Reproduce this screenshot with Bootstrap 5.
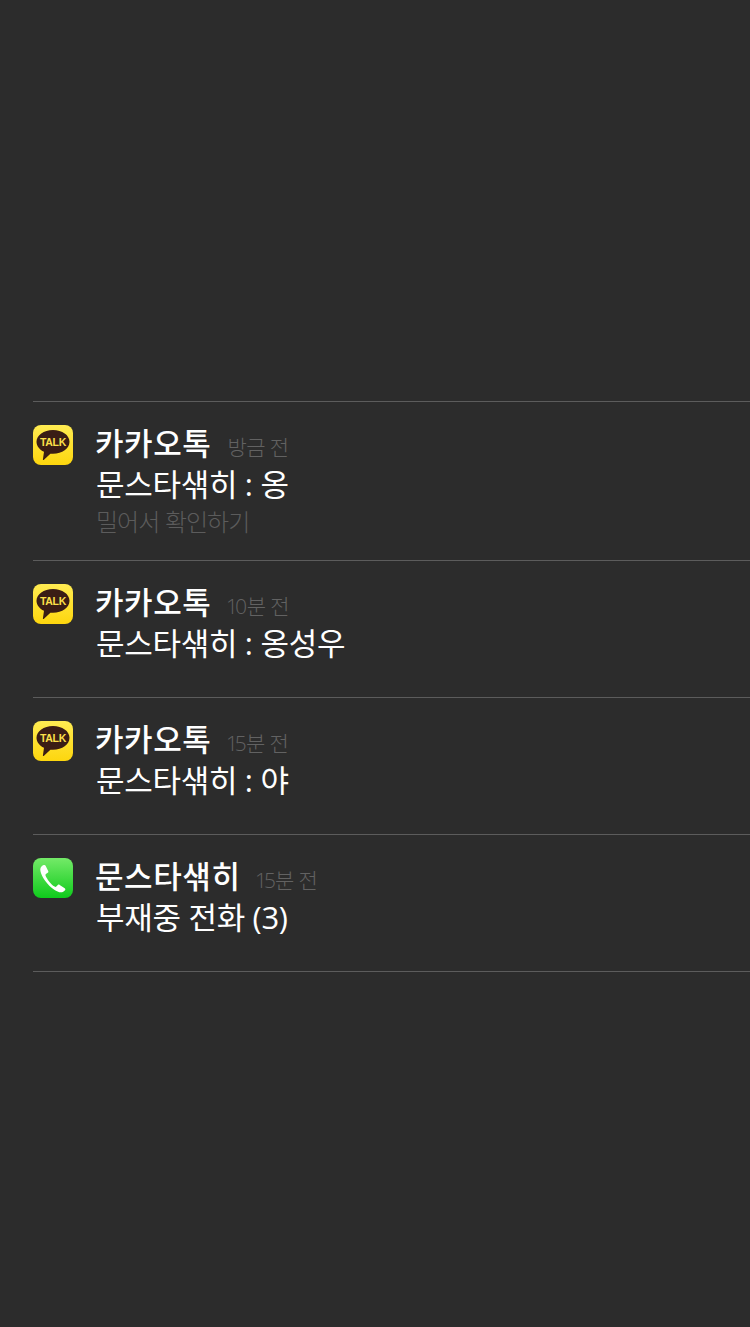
<!DOCTYPE html>
<html lang="ko">
<head>
  <meta charset="UTF-8" />
  <meta name="viewport" content="width=device-width, initial-scale=1.0" />
  <title>알림</title>
  <link href="https://cdn.jsdelivr.net/npm/bootstrap@5.3.3/dist/css/bootstrap.min.css" rel="stylesheet" />
  <script src="https://cdn.jsdelivr.net/npm/bootstrap@5.3.3/dist/js/bootstrap.bundle.min.js"></script>
  <style>
    body { background: #2c2c2c; font-family: "Noto Sans CJK KR", "Noto Sans", sans-serif; min-height: 1327px; }
    .noti-list { padding: 401px 0 0 33px; }
    .noti-row { border-top: 1px solid #5c5c5c; height: 137px; padding-top: 23px; }
    .noti-row.tall { height: 159px; }
    .noti-last { border-top: 1px solid #5c5c5c; }
    .noti-icon { width: 40px; height: 40px; flex: none; display: block; }
    .noti-text { margin-left: 22px; }
    .noti-name { color: #fff; font-size: 31px; font-weight: 500; line-height: 34px; letter-spacing: .6px; }
    .noti-time { color: #626262; font-family: "Open Sans", "Noto Sans CJK KR", sans-serif; font-size: 21px; font-weight: 300; margin-left: 16px; letter-spacing: -.6px; font-variant-numeric: proportional-nums; }
    .noti-msg { color: #fff; font-family: "Open Sans", "Noto Sans CJK KR", sans-serif; font-size: 31px; font-weight: 400; line-height: 40px; letter-spacing: -.3px; margin-left: 1px; }
    .noti-hint { color: #5c5c5c; font-size: 24px; font-weight: 300; line-height: 34px; letter-spacing: -1px; margin-left: 1px; }
  </style>
</head>
<body>
  <svg width="0" height="0" class="position-absolute">
    <defs>
      <linearGradient id="talkBg" x1="0" y1="0" x2="0" y2="1">
        <stop offset="0" stop-color="#ffec52" />
        <stop offset="1" stop-color="#fdd60e" />
      </linearGradient>
      <linearGradient id="phoneBg" x1="0" y1="0" x2="0" y2="1">
        <stop offset="0" stop-color="#74ea68" />
        <stop offset="1" stop-color="#0fcb1c" />
      </linearGradient>
      <symbol id="talkIcon" viewBox="0 0 40 40">
        <rect width="40" height="40" rx="8" fill="url(#talkBg)" />
        <path d="M20 5C10.800 5 3.500 10.200 3.500 16.800c0 4.200 3 7.900 7.500 10L9.900 34.500c-.1.500.4.800.8.500l6.700-6.300c.9.100 1.700.1 2.600.1 9.200 0 16.500-5.300 16.500-12S29.200 5 20 5z" fill="#3a1d15" />
        <text x="20" y="21" text-anchor="middle" font-family="Liberation Sans, sans-serif" font-size="10.500" font-weight="700" letter-spacing="-.3" fill="#fde04a">TALK</text>
      </symbol>
      <symbol id="phoneIcon" viewBox="0 0 40 40">
        <rect width="40" height="40" rx="8" fill="url(#phoneBg)" />
        <path transform="translate(1.500 1.500)" d="M9.200 5.600c-1.500.5-3.300 2-3.400 4.200-.1 3.300 2.300 8.300 6 13 3.800 4.700 8.700 8.800 13 9.900 2.500.6 4.600-.5 5.700-1.900.6-.8.400-1.500-.3-2l-5-3.400c-.7-.4-1.300-.4-1.900.2l-1.500 1.500c-.5.400-1.100.4-1.700 0-1.900-1.300-3.800-3.100-5.500-5.200-1.600-2-2.900-4.100-3.600-5.900-.2-.6-.1-1.100.4-1.500l1.800-1.200c.7-.5.800-1.100.5-1.900l-2.600-5.200c-.4-.7-1-.9-1.900-.6z" fill="#fff" />
      </symbol>
    </defs>
  </svg>

  <div class="noti-list">
    <div class="noti-row tall d-flex">
      <svg class="noti-icon"><use href="#talkIcon" /></svg>
      <div class="noti-text">
        <div class="noti-name">카카오톡<span class="noti-time">방금 전</span></div>
        <div class="noti-msg">문스타샊히 : 옹</div>
        <div class="noti-hint">밀어서 확인하기</div>
      </div>
    </div>
    <div class="noti-row d-flex">
      <svg class="noti-icon"><use href="#talkIcon" /></svg>
      <div class="noti-text">
        <div class="noti-name">카카오톡<span class="noti-time">10분 전</span></div>
        <div class="noti-msg">문스타샊히 : 옹성우</div>
      </div>
    </div>
    <div class="noti-row d-flex">
      <svg class="noti-icon"><use href="#talkIcon" /></svg>
      <div class="noti-text">
        <div class="noti-name">카카오톡<span class="noti-time">15분 전</span></div>
        <div class="noti-msg">문스타샊히 : 야</div>
      </div>
    </div>
    <div class="noti-row d-flex">
      <svg class="noti-icon"><use href="#phoneIcon" /></svg>
      <div class="noti-text">
        <div class="noti-name">문스타샊히<span class="noti-time">15분 전</span></div>
        <div class="noti-msg">부재중 전화 (3)</div>
      </div>
    </div>
    <div class="noti-last"></div>
  </div>
</body>
</html>
